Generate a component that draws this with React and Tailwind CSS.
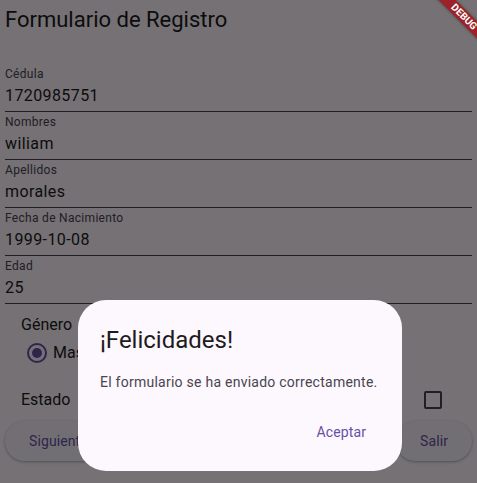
import React from 'react';

const fields = [
    { label: 'Cédula', value: '1720985751' },
    { label: 'Nombres', value: 'wiliam' },
    { label: 'Apellidos', value: 'morales' },
    { label: 'Fecha de Nacimiento', value: '1999-10-08' },
    { label: 'Edad', value: '25' },
];

const Field = ({ label, value }) => (
    <div className="pt-[2px] pb-[3px] border-b border-[#49454f]">
        <div className="h-4 text-[12px] leading-4 text-[#49454f] tracking-[0.3px]">{label}</div>
        <div className="mt-[2px] h-6 text-[16px] leading-6 text-[#1d1b20] tracking-[0.4px]">{value}</div>
    </div>
);

export default function App() {
    return (
        <div className="relative w-[477px] h-[483px] overflow-hidden bg-[#fef7ff] font-['Roboto',sans-serif]">
            {/* Formulario */}
            <div className="px-[5px]">
                <h1 className="mt-[6px] h-7 text-[22px] leading-7 text-[#1d1b20]">Formulario de Registro</h1>
                <div className="mt-[30px]">
                    {fields.map((f) => (
                        <Field key={f.label} label={f.label} value={f.value} />
                    ))}
                </div>

                <div className="pl-4 mt-[9px] h-6 text-[16px] leading-6 text-[#1d1b20]">Género</div>
                <div className="mt-[6px] flex items-center h-5 pl-[22px]">
                    <span className="w-5 h-5 rounded-full border-2 border-[#6750a4] flex items-center justify-center">
                        <span className="w-[10px] h-[10px] rounded-full bg-[#6750a4]"></span>
                    </span>
                    <span className="ml-[6px] text-[16px] text-[#1d1b20]">Mas</span>
                </div>

                <div className="mt-[25px] h-6 flex items-center justify-between pl-4 pr-[30px]">
                    <span className="text-[16px] leading-6 text-[#1d1b20]">Estado</span>
                    <span className="w-[18px] h-[18px] rounded-[2px] border-2 border-[#49454f]"></span>
                </div>

                <div className="mt-[9px] flex justify-between">
                    <button className="h-10 px-6 rounded-full bg-[#f7f2fa] text-[#6750a4] text-[14px] tracking-[0.1px] shadow-[0_1px_3px_rgba(0,0,0,0.3)]">
                        Siguiente
                    </button>
                    <button className="h-10 px-6 rounded-full bg-[#f7f2fa] text-[#6750a4] text-[14px] tracking-[0.1px] shadow-[0_1px_3px_rgba(0,0,0,0.3)]">
                        Salir
                    </button>
                </div>
            </div>

            {/* Barrera modal */}
            <div className="absolute inset-0 bg-black/[0.54]"></div>

            {/* Diálogo */}
            <div className="absolute left-[78px] top-[300px] w-[324px] h-[171px] rounded-[28px] bg-[#fdf7fe] pl-[22px] pr-6 pt-6">
                <div className="h-8 text-[24px] leading-8 text-[#1d1b20]">¡Felicidades!</div>
                <div className="mt-4 h-5 text-[14px] leading-5 text-[#49454f] tracking-[0.25px] whitespace-nowrap">
                    El formulario se ha enviado correctamente.
                </div>
                <div className="mt-5 flex justify-end">
                    <button className="h-10 px-3 text-[14px] text-[#6750a4] tracking-[0.1px]">Aceptar</button>
                </div>
            </div>

            {/* Banner DEBUG */}
            <div className="absolute left-[404px] top-[11px] w-[120px] h-3 rotate-45 bg-[#9b2228] flex items-center justify-center shadow-[0_0_3px_rgba(0,0,0,0.4)]">
                <span className="text-[10px] leading-3 font-bold text-white">DEBUG</span>
            </div>
        </div>
    );
}
